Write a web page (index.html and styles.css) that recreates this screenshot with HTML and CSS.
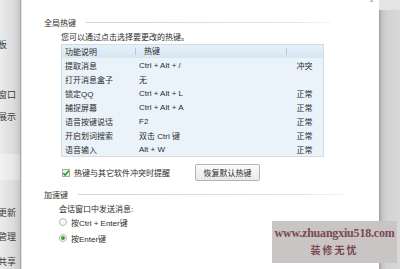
FILE: index.html
```html
<!DOCTYPE html>
<html lang="zh-CN">
<head>
  <meta charset="UTF-8" />
  <title>热键设置</title>
  <link rel="stylesheet" href="styles.css">
</head>
<body>
  <div class="screen">
    <!-- left panel of the window behind, partly hidden -->
    <div class="side">
      <div class="side-item item-1">主面板</div>
      <div class="side-item item-2">聊天窗口</div>
      <div class="side-item item-3">消息展示</div>
      <div class="side-band"></div>
      <div class="side-item item-4">软件更新</div>
      <div class="side-item item-5">文件管理</div>
      <div class="side-item item-6">文件共享</div>
    </div>

    <div class="dialog">
      <span class="close">×</span>

      <div class="group-title">
        <span>全局热键</span>
        <span class="rule"></span>
      </div>
      <div class="group-body">
        <p class="hint">您可以通过点击选择要更改的热键。</p>

        <div class="hotkeys">
          <div class="hk-row hk-head">
            <span class="col-name">功能说明</span>
            <span class="col-key">热键</span>
            <span class="col-state"></span>
          </div>
          <div class="hk-row">
            <span class="col-name">提取消息</span>
            <span class="col-key">Ctrl + Alt + /</span>
            <span class="col-state">冲突</span>
          </div>
          <div class="hk-row">
            <span class="col-name">打开消息盒子</span>
            <span class="col-key">无</span>
            <span class="col-state"></span>
          </div>
          <div class="hk-row">
            <span class="col-name">锁定QQ</span>
            <span class="col-key">Ctrl + Alt + L</span>
            <span class="col-state">正常</span>
          </div>
          <div class="hk-row">
            <span class="col-name">捕捉屏幕</span>
            <span class="col-key">Ctrl + Alt + A</span>
            <span class="col-state">正常</span>
          </div>
          <div class="hk-row">
            <span class="col-name">语音按键说话</span>
            <span class="col-key">F2</span>
            <span class="col-state">正常</span>
          </div>
          <div class="hk-row">
            <span class="col-name">开启划词搜索</span>
            <span class="col-key">双击 Ctrl 键</span>
            <span class="col-state">正常</span>
          </div>
          <div class="hk-row">
            <span class="col-name">语音输入</span>
            <span class="col-key">Alt + W</span>
            <span class="col-state">正常</span>
          </div>
        </div>

        <div class="check-row">
          <label class="check">
            <span class="box">
              <svg width="8" height="8" viewBox="0 0 8 8"><path d="M1.3 4.2 L3.2 6.1 L6.8 1.8" fill="none" stroke="#2f9a2a" stroke-width="1.6"/></svg>
            </span>
            热键与其它软件冲突时提醒
          </label>
          <button class="btn">恢复默认热键</button>
        </div>
      </div>

      <div class="group-title second">
        <span>加速键</span>
        <span class="rule"></span>
      </div>
      <div class="group-body">
        <p class="sub">会话窗口中发送消息:</p>
        <label class="radio"><span class="dot"></span>按Ctrl + Enter键</label>
        <label class="radio on"><span class="dot"></span>按Enter键</label>
      </div>
    </div>

    <div class="backdrop"></div>

    <div class="watermark">
      <div class="wm-url">www.zhuangxiu518.com</div>
      <div class="wm-name">装修无忧</div>
    </div>
  </div>
</body>
</html>
```

FILE: styles.css
```css
:root {
  --text: #2b2b2b;
  --line: #d6dbe0;
  --table-bg: #eaf3fa;
  --head-bg: #dde9f4;
  --green: #3aa335;
}
body {
  margin: 0;
  font-family: "Liberation Sans", "Noto Sans CJK SC", sans-serif;
  font-size: 8px;
  color: var(--text);
}
.screen {
  position: relative;
  display: flex;
  width: 400px;
  height: 269px;
  overflow: hidden;
  background: #fff;
}

/* left panel */
.side {
  width: 20px;
  flex: none;
  display: flex;
  flex-direction: column;
  overflow: hidden;
  background: linear-gradient(to right, #ececec, #dadada 70%, #c6c6c6);
  border-right: 1px solid #a9a9a9;
  box-shadow: 1px 0 0 #e2e2e2;
}
.side-item {
  height: 12px;
  line-height: 12px;
  margin-left: -20px;
  white-space: nowrap;
  font-size: 9px;
  color: #3a3a3a;
}
.item-1 { margin-top: 39px; }
.item-2 { margin-top: 38px; }
.item-3 { margin-top: 10px; }
.side-band {
  height: 26px;
  margin-top: 31px;
  background: linear-gradient(to right, #f3f3f3, #e6e6e6 70%, #d2d2d2);
}
.item-4 { margin-top: 27px; }
.item-5 { margin-top: 12px; }
.item-6 { margin-top: 13px; }

/* dialog */
.dialog {
  position: relative;
  width: 358px;
  flex: none;
  padding: 17px 0 0 23px;
  box-sizing: border-box;
}
.close {
  position: absolute;
  top: -4px;
  right: 5px;
  font-size: 8px;
  color: #9a9a9a;
}
.group-title {
  display: flex;
  align-items: center;
  gap: 10px;
  height: 11px;
  padding-right: 48px;
}
.group-title.second {
  margin-top: 8px;
  padding-right: 35px;
}
.rule {
  flex: 1;
  height: 1px;
  background: linear-gradient(to right, #cfd5da, #dfe3e6 80%, #f4f5f6);
}
.group-body {
  padding-left: 17px;
}
.hint {
  margin: 5px 0 1px;
  line-height: 10px;
}
.hotkeys {
  width: 263px;
  border: 1px solid var(--line);
  background: var(--table-bg);
  box-sizing: border-box;
}
.hk-row {
  display: flex;
  height: 14px;
  align-items: center;
}
.hk-head {
  height: 13px;
  background: linear-gradient(#e6f0f8, #d8e6f2);
}
.col-name {
  width: 73px;
  padding-left: 3px;
  box-sizing: border-box;
}
.col-key {
  width: 151px;
  padding-left: 4px;
  box-sizing: border-box;
}
.col-state {
  flex: 1;
  text-align: center;
}
.hk-head .col-key,
.hk-head .col-state {
  border-left: 1px solid #b9c6d2;
  height: 7px;
  line-height: 7px;
  padding-left: 8px;
}
.check-row {
  display: flex;
  align-items: center;
  height: 17px;
  margin-top: 7px;
}
.check {
  display: flex;
  align-items: center;
  gap: 4px;
  width: 133px;
  padding-left: 1px;
}
.box {
  width: 8px;
  height: 8px;
  border: 1px solid #9fb19c;
  background: #e9f5e6;
  display: flex;
  align-items: center;
  justify-content: center;
  box-sizing: border-box;
}
.box svg {
  flex: none;
}
.btn {
  width: 65px;
  height: 17px;
  padding: 0;
  font: inherit;
  color: var(--text);
  border: 1px solid #b3b3b3;
  border-radius: 2px;
  background: linear-gradient(#fbfbfb, #e9e9e9);
}
.sub {
  margin: 5px 0 0 -2px;
  line-height: 9px;
}
.radio {
  display: flex;
  align-items: center;
  gap: 4px;
  height: 16px;
  margin-left: -2px;
}
.dot {
  width: 8px;
  height: 8px;
  border: 1px solid #b9b9b9;
  border-radius: 50%;
  background: #f8f8f8;
  box-sizing: border-box;
  display: flex;
  align-items: center;
  justify-content: center;
}
.radio.on .dot::after {
  content: "";
  width: 4px;
  height: 4px;
  border-radius: 50%;
  background: var(--green);
}

/* window edge on the right */
.backdrop {
  flex: 1;
  background: linear-gradient(to right, #9e9e9e, #c4c4c4 3px, #d3d3d3 8px, #d8d8d8);
  box-shadow: inset 0 10px 0 #e4e4e4;
}

/* watermark over the screenshot */
.watermark {
  position: absolute;
  left: 272px;
  top: 221px;
  width: 125px;
  height: 42px;
  background: #c9c5c5;
  color: #7a4752;
  text-align: center;
  font-weight: bold;
}
.wm-url {
  margin-top: 5px;
  font-family: "Liberation Serif", serif;
  font-size: 12px;
  line-height: 14px;
  letter-spacing: -0.2px;
}
.wm-name {
  margin-top: 3px;
  font-family: "Noto Sans CJK SC", sans-serif;
  font-size: 10px;
  line-height: 14px;
  letter-spacing: 2px;
}
```
